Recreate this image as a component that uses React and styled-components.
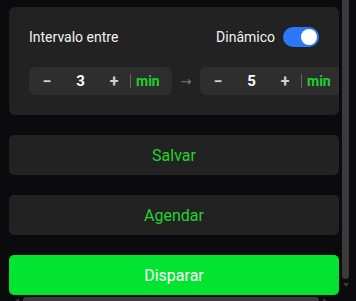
import styled, { createGlobalStyle } from "styled-components";

const GlobalStyle = createGlobalStyle`
  html, body {
    margin: 0;
    padding: 0;
    background: #0b0b0d;
    overflow: hidden;
  }
  body {
    font-family: Roboto, "Liberation Sans", sans-serif;
  }
`;

/* AREA COM ROLAGEM */
const Frame = styled.div`
  position: relative;
  width: 356px;
  height: 301px;
  overflow: hidden;
  background: #0b0b0d;
`;

const Content = styled.div`
  width: 330px;
  padding: 7px 0 12px 9px;
  display: flex;
  flex-direction: column;
  gap: 20px;
`;

/* BARRAS DE ROLAGEM (desenhadas por cima) */
const VScroll = styled.div`
  position: absolute;
  top: 0;
  left: 342px;
  width: 7px;
  height: 290px;
  display: flex;
  flex-direction: column;
  align-items: center;
  gap: 4px;
`;

const VThumb = styled.div`
  width: 7px;
  height: 279px;
  background: #3a3a3a;
  border-radius: 0 0 4px 4px;
`;

const ArrowDown = styled.div`
  width: 0;
  height: 0;
  border-left: 3.5px solid transparent;
  border-right: 3.5px solid transparent;
  border-top: 4px solid #3a3a3a;
`;

const HScroll = styled.div`
  position: absolute;
  left: 15px;
  top: 297px;
  width: 320px;
  height: 7px;
  display: flex;
  align-items: center;
  gap: 4px;
`;

const ArrowLeft = styled.div`
  width: 0;
  height: 0;
  border-top: 3.5px solid transparent;
  border-bottom: 3.5px solid transparent;
  border-right: 4px solid #3a3a3a;
`;

const ArrowRight = styled(ArrowLeft)`
  border-right: none;
  border-left: 4px solid #3a3a3a;
`;

const HThumb = styled.div`
  width: 296px;
  height: 7px;
  background: #3a3a3a;
  border-radius: 4px;
`;

/* CARD DO INTERVALO */
const Card = styled.div`
  background: #222222;
  border-radius: 6px;
  padding: 20px 0 20px 20px;
  overflow: hidden;
  display: flex;
  flex-direction: column;
  gap: 20px;
`;

const HeaderRow = styled.div`
  display: flex;
  align-items: center;
  justify-content: space-between;
  padding-right: 20px;
  height: 20px;
`;

const Label = styled.span`
  color: #f2f2f2;
  font-size: 14px;
`;

const DynamicGroup = styled.div`
  display: flex;
  align-items: center;
  gap: 8px;
`;

const Toggle = styled.div`
  width: 36px;
  height: 20px;
  border-radius: 10px;
  background: ${(p) => (p.$on ? "#2a78f5" : "#555")};
  display: flex;
  align-items: center;
  justify-content: ${(p) => (p.$on ? "flex-end" : "flex-start")};
  padding: 0 2px;
  box-sizing: border-box;
`;

const Knob = styled.div`
  width: 16px;
  height: 16px;
  border-radius: 50%;
  background: #ffffff;
`;

const StepperRow = styled.div`
  display: flex;
  align-items: center;
  gap: 6px;
  white-space: nowrap;
`;

const Stepper = styled.div`
  flex: 0 0 143px;
  height: 28px;
  background: #2e2e2e;
  border-radius: 6px;
  display: flex;
  align-items: center;
  padding-left: 13px;
  box-sizing: border-box;
`;

const StepBtn = styled.span`
  width: 10px;
  text-align: center;
  color: #d0d0d0;
  font-size: 16px;
  font-weight: 700;
`;

const Value = styled.span`
  width: 57px;
  text-align: center;
  color: #ffffff;
  font-size: 15px;
  font-weight: 700;
`;

const Divider = styled.span`
  width: 1px;
  height: 14px;
  background: #666;
  margin: 0 5px 0 11px;
`;

const Unit = styled.span`
  color: #1fd12b;
  font-size: 14px;
  font-weight: 700;
`;

const Arrow = styled.span`
  flex: 0 0 16px;
  color: #7a7a7a;
  font-family: "DejaVu Sans", sans-serif;
  font-size: 13px;
  text-align: center;
`;

/* BOTOES */
const ActionButton = styled.button`
  height: 40px;
  width: 100%;
  border: none;
  border-radius: 5px;
  background: ${(p) => (p.$primary ? "#02e42f" : "#222222")};
  color: ${(p) => (p.$primary ? "#ffffff" : "#20d42b")};
  font-family: Roboto, "Liberation Sans", sans-serif;
  font-size: 16px;
  font-weight: 400;
  cursor: pointer;
`;

const IntervalStepper = ({ value }) => (
  <Stepper>
    <StepBtn>−</StepBtn>
    <Value>{value}</Value>
    <StepBtn>+</StepBtn>
    <Divider />
    <Unit>min</Unit>
  </Stepper>
);

const App = () => {
  return (
    <>
      <GlobalStyle />
      <Frame>
        <Content>
          <Card>
            <HeaderRow>
              <Label>Intervalo entre</Label>
              <DynamicGroup>
                <Label>Dinâmico</Label>
                <Toggle $on>
                  <Knob />
                </Toggle>
              </DynamicGroup>
            </HeaderRow>
            <StepperRow>
              <IntervalStepper value={3} />
              <Arrow>→</Arrow>
              <IntervalStepper value={5} />
            </StepperRow>
          </Card>
          <ActionButton>Salvar</ActionButton>
          <ActionButton>Agendar</ActionButton>
          <ActionButton $primary>Disparar</ActionButton>
        </Content>
        <VScroll>
          <VThumb />
          <ArrowDown />
        </VScroll>
        <HScroll>
          <ArrowLeft />
          <HThumb />
          <ArrowRight />
        </HScroll>
      </Frame>
    </>
  );
};

export default App;
